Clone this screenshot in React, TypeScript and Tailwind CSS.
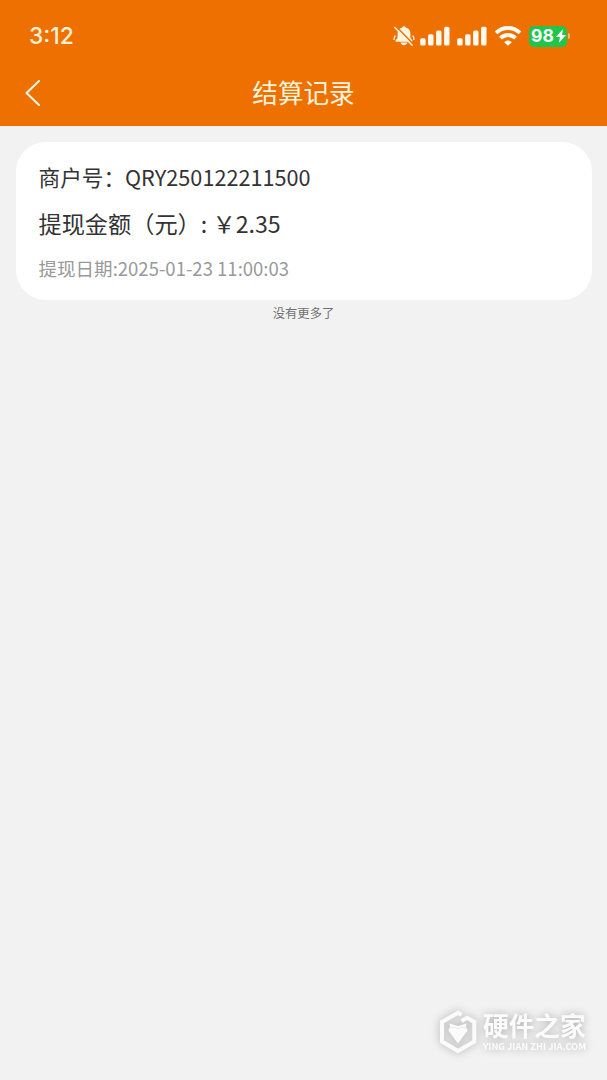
function MutedBell() {
  return (
    <svg className="h-[22px] w-[22px]" viewBox="0 0 22 22" fill="none">
      <path d="M11 1.200c-.9 0-1.600.6-1.700 1.400C6.300 3.300 4.600 5.500 4.600 8.500v4.300L2.600 15.400c-.4.600-.1 1.300.7 1.300h15.400c.8 0 1.100-.7.7-1.300l-2-2.600V8.500c0-3-1.700-5.200-4.700-5.900-.1-.8-.8-1.400-1.700-1.400Z" fill="#fff4df" />
      <path d="M7.500 17.600h7c-.6 1.800-1.900 2.700-3.500 2.700s-2.900-.9-3.500-2.700Z" fill="#fff4df" />
      <path d="M2.300 10.500C1.200 12 .9 13.500 1 15M19.700 10.500c1.100 1.500 1.400 3 1.300 4.500" stroke="#fff4df" strokeWidth="1.300" />
      <path d="m3.200 1.500 17 17.500" stroke="#ed7000" strokeWidth="1.500" />
      <path d="m1.800 2.500 17.400 17.700" stroke="#fff4df" strokeWidth="1.500" strokeLinecap="round" />
    </svg>
  );
}

function Signal() {
  return (
    <svg className="h-[20px] w-[30px]" viewBox="0 0 30 20" fill="#fff9ee">
      <rect x="0.200" y="12.300" width="5.400" height="7.200" rx="1.500" />
      <rect x="8.100" y="8.300" width="5.400" height="11.200" rx="1.500" />
      <rect x="16.100" y="4.600" width="5.400" height="14.900" rx="1.500" />
      <rect x="24.100" y="0.700" width="5.400" height="18.800" rx="1.500" />
    </svg>
  );
}

function Wifi() {
  return (
    <svg className="h-[20px] w-[28px]" viewBox="0 0 28 20" fill="none" stroke="#fff9ee">
      <path d="M2 6.900C9.100.4 18.900.4 26 6.900" strokeWidth="3.900" />
      <path d="M6.400 12.100c4.500-4.200 10.700-4.200 15.200 0" strokeWidth="3.900" />
      <path d="M10.200 16.200c2.300-2.300 5.300-2.300 7.600 0L14 19.800Z" fill="#fff9ee" stroke="none" />
    </svg>
  );
}

function Battery() {
  return (
    <div className="flex items-center">
      <div className="flex h-[21px] w-[38px] items-center justify-center rounded-[5px] bg-[#20c54b]">
        <span className="w-[24px] text-center font-['Inter'] text-[17.500px] leading-none font-bold text-white">98</span>
        <svg className="ml-px h-[14px] w-[10px]" viewBox="0 0 10 14" fill="#fff">
          <path d="M6.800.3 0 8h3.900L3 13.700 10 6H6.100Z" />
        </svg>
      </div>
      <div className="ml-px h-[6px] w-[2px] rounded-r-full bg-[#f6b16c]" />
    </div>
  );
}

function Watermark() {
  return (
    <div className="absolute top-[1008px] left-[439px] flex gap-[6px] text-[#fbfbfb] drop-shadow-[0_0_4px_rgba(0,0,0,0.3)]">
      <svg className="mt-[2px] h-[44px] w-[38px]" viewBox="0 0 38 44" fill="none">
        <path d="M22.500 4.800 19 2.800 3 12v19.500L19 41l16.300-9.500V12L28 7.800 22.500 11" stroke="currentColor" strokeWidth="4" />
        <path d="m10.500 13.500 8.500 2.500 8.500-2.500-.7 4.500H11.200Z" fill="currentColor" />
        <path d="M11 17h16l1.700 3.500L19 33.500 9.300 20.500Z" fill="currentColor" />
        <path d="m11 18 4.500-1 3.500 2 3.500-2 4.500 1" stroke="#e3e3e3" strokeWidth="0.700" />
      </svg>
      <div className="flex flex-col whitespace-nowrap">
        <span className="font-['Noto_Sans_CJK_SC',sans-serif] text-[25.700px] leading-[34px] font-bold">硬件之家</span>
        <span className="font-['Noto_Sans_CJK_SC',sans-serif] text-[9.250px] leading-[9px] font-bold">YING JIAN ZHI JIA.COM</span>
      </div>
    </div>
  );
}

export default function App() {
  return (
    <div className="relative flex h-[1080px] w-[607px] flex-col overflow-hidden bg-[#f2f2f2] font-['Noto_Sans_CJK_SC',sans-serif] text-[#333]">
      <header className="h-[126px] shrink-0 bg-[#ed7000]">
        <div className="flex h-[60px] items-center justify-between pt-[12px] pr-[37px] pl-[29px]">
          <span className="mt-px font-['Inter',sans-serif] text-[22.800px] leading-none font-medium text-[#fff0d2]">3:12</span>
          <div className="flex items-center">
            <MutedBell />
            <div className="ml-[5px] flex gap-[7px]">
              <Signal />
              <Signal />
            </div>
            <div className="mr-[7px] ml-[7px]">
              <Wifi />
            </div>
            <Battery />
          </div>
        </div>
        <div className="grid h-[66px] grid-cols-[80px_1fr_80px] items-center">
          <button className="pl-[24px]" aria-label="返回">
            <svg className="h-[28px] w-[18px]" viewBox="0 0 18 28" fill="none">
              <path d="M15 2 2.500 14 15 26" stroke="#fff6e4" strokeWidth="2.100" strokeLinecap="round" strokeLinejoin="round" />
            </svg>
          </button>
          <h1 className="-mt-[2px] text-center text-[25.600px] leading-none text-[#fff4dc]">结算记录</h1>
        </div>
      </header>

      <main className="flex flex-col px-[15.500px] pt-[16px]">
        <section className="flex h-[158px] flex-col rounded-[30px] bg-white pt-[12px] pl-[23px] whitespace-nowrap">
          <p className="h-[46px] text-[21.650px] leading-[46px]">商户号：QRY250122211500</p>
          <p className="h-[46px] text-[23.200px] leading-[46px]">提现金额（元）: ￥2.35</p>
          <p className="h-[44px] text-[18.550px] leading-[44px] text-[#999]">提现日期:2025-01-23 11:00:03</p>
        </section>
        <p className="text-center text-[12.300px] leading-[27px] text-[#707070]">没有更多了</p>
      </main>

      <Watermark />
    </div>
  );
}
